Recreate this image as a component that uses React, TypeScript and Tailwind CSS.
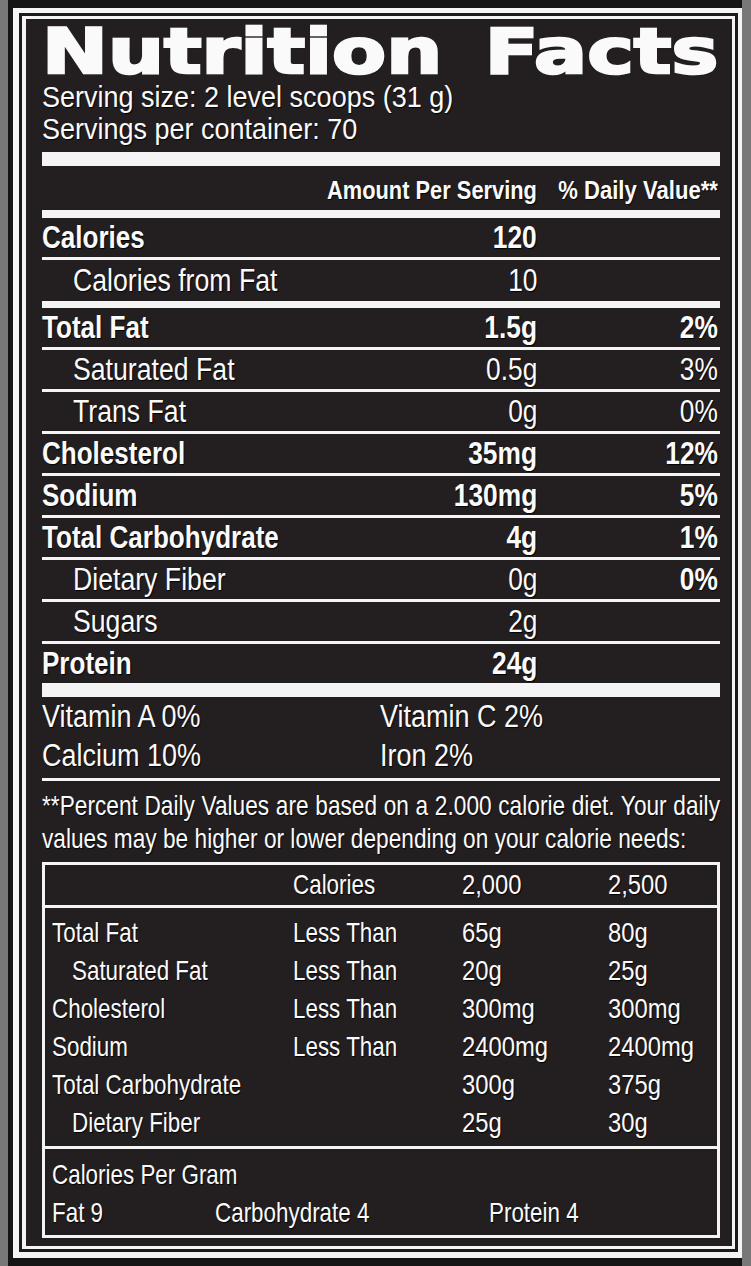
import clsx from "clsx";
import type { ReactNode } from "react";

type Row = {
	label: string;
	amount: string;
	dv: string;
	bold?: boolean;
	dvBold?: boolean;
	indent?: boolean;
	h?: string;
	after: string;
};

const rows: Row[] = [
	{ label: "Calories", amount: "120", dv: "", bold: true, after: "h-[3px]" },
	{ label: "Calories from Fat", amount: "10", dv: "", indent: true, h: "h-[41px]", after: "h-[7px]" },
	{ label: "Total Fat", amount: "1.5g", dv: "2%", bold: true, dvBold: true, after: "h-[3px]" },
	{ label: "Saturated Fat", amount: "0.5g", dv: "3%", indent: true, after: "h-[3px]" },
	{ label: "Trans Fat", amount: "0g", dv: "0%", indent: true, after: "h-[3px]" },
	{ label: "Cholesterol", amount: "35mg", dv: "12%", bold: true, dvBold: true, after: "h-[3px]" },
	{ label: "Sodium", amount: "130mg", dv: "5%", bold: true, dvBold: true, after: "h-[3px]" },
	{ label: "Total Carbohydrate", amount: "4g", dv: "1%", bold: true, dvBold: true, after: "h-[3px]" },
	{ label: "Dietary Fiber", amount: "0g", dv: "0%", indent: true, dvBold: true, after: "h-[3px]" },
	{ label: "Sugars", amount: "2g", dv: "", indent: true, after: "h-[3px]" },
	{ label: "Protein", amount: "24g", dv: "", bold: true, after: "h-[14px]" },
];

const limits = [
	{ label: "Total Fat", less: "Less Than", a: "65g", b: "80g" },
	{ label: "Saturated Fat", less: "Less Than", a: "20g", b: "25g", indent: true },
	{ label: "Cholesterol", less: "Less Than", a: "300mg", b: "300mg" },
	{ label: "Sodium", less: "Less Than", a: "2400mg", b: "2400mg" },
	{ label: "Total Carbohydrate", less: "", a: "300g", b: "375g" },
	{ label: "Dietary Fiber", less: "", a: "25g", b: "30g", indent: true },
];

// condensed look: Liberation Sans squeezed horizontally
const T = ({ s, right, children }: { s: string; right?: boolean; children: ReactNode }) => (
	<span className={clsx("inline-block whitespace-nowrap", right ? "origin-right" : "origin-left", s)}>
		{children}
	</span>
);

const Bar = ({ h }: { h: string }) => <div className={clsx(h, "bg-[#f4f4f4]")} />;

const NutrientRow = ({ row }: { row: Row }) => (
	<>
		<div className={clsx("flex items-center text-[31px] leading-none", row.h ?? "h-[39px]")}>
			<div className={clsx("flex-1", row.indent && "pl-[31px]", row.bold && "font-bold")}>
				<T s={row.bold ? "scale-x-[0.84]" : "scale-x-[0.86]"}>{row.label}</T>
			</div>
			<div className={clsx("flex w-[200px] justify-end", row.bold && "font-bold")}>
				<T s="scale-x-[0.85]" right>
					{row.amount}
				</T>
			</div>
			<div className={clsx("flex w-[183px] justify-end pr-[2px]", row.dvBold && "font-bold")}>
				<T s="scale-x-[0.85]" right>
					{row.dv}
				</T>
			</div>
		</div>
		<Bar h={row.after} />
	</>
);

const Cell = ({ children, num }: { children: ReactNode; num?: boolean }) => (
	<div>
		<T s={num ? "scale-x-[0.85]" : "scale-x-[0.8]"}>{children}</T>
	</div>
);

export default function App() {
	return (
		<div className="h-[1266px] overflow-hidden bg-[#787878] pl-[8px]">
			<div className="w-[734px] bg-[#151515] pl-[5px] pt-[8px] pb-[20px]">
				<div className="border-[#f4f4f4] border-l-[6px] border-t-[5px] border-b-[6px] border-r-[4px] bg-[#1b1b1b] p-[3px]">
					<div className="overflow-hidden border-[#f4f4f4] border-l-[4px] border-t-[3px] border-b-[3px] border-r-[3px] bg-[#231f20] pl-[16px] pr-[12px] pb-[8px] text-[#fafafa] font-['Liberation_Sans','Arial',sans-serif] [text-shadow:1px_1px_1px_rgba(0,0,0,0.9)]">
						<div className="flex h-[62px] items-center pt-[4px]">
							<span className="inline-block origin-left scale-x-[1.27] font-['DejaVu_Sans',sans-serif] text-[62px] font-bold leading-[46px] whitespace-nowrap [word-spacing:12px] [-webkit-text-stroke:2.5px_#fafafa]">
								Nutrition Facts
							</span>
						</div>
						<div className="flex h-[32px] items-center text-[30px] leading-none">
							<T s="scale-x-[0.9]">Serving size: 2 level scoops (31 g)</T>
						</div>
						<div className="flex h-[32px] items-center text-[30px] leading-none">
							<T s="scale-x-[0.9]">Servings per container: 70</T>
						</div>
						<div className="mt-[7px]">
							<Bar h="h-[14px]" />
						</div>
						<div className="flex h-[44px] items-center pt-[3px] text-[26px] font-bold leading-none">
							<div className="flex flex-1 justify-end">
								<T s="scale-x-[0.84]" right>
									Amount Per Serving
								</T>
							</div>
							<div className="flex w-[183px] justify-end pr-[2px]">
								<T s="scale-x-[0.85]" right>
									% Daily Value**
								</T>
							</div>
						</div>
						<Bar h="h-[8px]" />
						{rows.map((r) => (
							<NutrientRow key={r.label} row={r} />
						))}
						<div className="text-[31px] leading-none">
							<div className="flex h-[39px] items-center">
								<div className="w-[338px]">
									<T s="scale-x-[0.87]">Vitamin A 0%</T>
								</div>
								<T s="scale-x-[0.87]">Vitamin C 2%</T>
							</div>
							<div className="flex h-[39px] items-center">
								<div className="w-[338px]">
									<T s="scale-x-[0.87]">Calcium 10%</T>
								</div>
								<T s="scale-x-[0.87]">Iron 2%</T>
							</div>
						</div>
						<div className="mt-[3px]">
							<Bar h="h-[3px]" />
						</div>
						<div className="pt-[8px] pb-[7px] text-[28px] leading-[33px]">
							<div className="w-[837px] origin-left scale-x-[0.81] whitespace-nowrap text-justify [text-align-last:justify]">
								**Percent Daily Values are based on a 2.000 calorie diet. Your daily
							</div>
							<div>
								<T s="scale-x-[0.81]">values may be higher or lower depending on your calorie needs:</T>
							</div>
						</div>
						<div className="border-[3px] border-[#f4f4f4] text-[28px] leading-none">
							<div className="grid h-[40px] grid-cols-[241px_169px_146px_1fr] items-center pl-[7px]">
								<div />
								<Cell>Calories</Cell>
								<Cell num>2,000</Cell>
								<Cell num>2,500</Cell>
							</div>
							<Bar h="h-[3px]" />
							<div className="pt-[6px] pb-[4px]">
								{limits.map((l) => (
									<div
										key={l.label}
										className="grid h-[38px] grid-cols-[241px_169px_146px_1fr] items-center pl-[7px]"
									>
										<div className={clsx(l.indent && "pl-[20px]")}>
											<T s="scale-x-[0.8]">{l.label}</T>
										</div>
										<Cell>{l.less}</Cell>
										<Cell num>{l.a}</Cell>
										<Cell num>{l.b}</Cell>
									</div>
								))}
							</div>
							<Bar h="h-[3px]" />
							<div className="pt-[7px] pb-[3px] pl-[7px]">
								<div className="flex h-[38px] items-center">
									<T s="scale-x-[0.8]">Calories Per Gram</T>
								</div>
								<div className="flex h-[38px] items-center">
									<div className="w-[163px]">
										<T s="scale-x-[0.8]">Fat 9</T>
									</div>
									<div className="w-[274px]">
										<T s="scale-x-[0.8]">Carbohydrate 4</T>
									</div>
									<T s="scale-x-[0.8]">Protein 4</T>
								</div>
							</div>
						</div>
					</div>
				</div>
			</div>
		</div>
	);
}
